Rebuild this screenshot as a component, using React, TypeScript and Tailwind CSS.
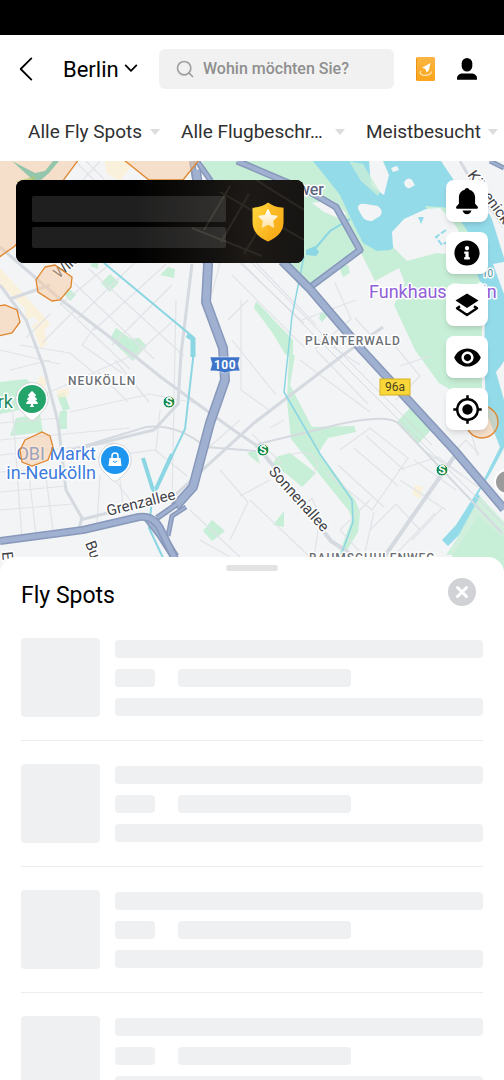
import type { ReactNode } from "react";
import { ChevronDown, ChevronLeft, Search, X } from "lucide-react";
import { FaInfoCircle, FaTree } from "react-icons/fa";
import { MdMyLocation, MdVisibility } from "react-icons/md";

function BookIcon() {
  return (
    <svg width="19" height="24" viewBox="0 0 19 24">
      <defs>
        <linearGradient id="book" x1="0" y1="0" x2="0" y2="1">
          <stop offset="0" stopColor="#fbb544" />
          <stop offset="1" stopColor="#fba51c" />
        </linearGradient>
      </defs>
      <rect width="19" height="24" rx="1.5" fill="url(#book)" />
      <path d="M.5 1v22" stroke="#ef9412" />
      <path d="M14.500 6 6 10.800l3.200 1 1.600 3.700 2-2.200z" fill="#fff" />
      <path d="M5 14c-2 2.500 0 4.500 4.500 4.300 4-.2 6.500-1.800 5.500-3.800" stroke="#ffe5ba" strokeWidth="1.200" fill="none" />
    </svg>
  );
}

function UserIcon() {
  return (
    <svg width="20" height="22" viewBox="0 0 20 22">
      <rect x="4.700" y="0" width="10.600" height="13.600" rx="5.300" />
      <path d="M0 21.800v-1.600c0-2.700 2.600-4.700 5.600-4.700h8.800c3 0 5.600 2 5.600 4.700v1.600z" />
    </svg>
  );
}

function BellIcon() {
  return (
    <svg width="22" height="27" viewBox="0 0 22 27">
      <path d="M11 0c1.200 0 2 .8 2.300 1.800 3.700 1 5.800 4 5.800 7.800v6.200l2.300 2.400c1 1.100.5 2.600-1 2.600H1.600c-1.500 0-2-1.500-1-2.600l2.300-2.400V9.600c0-3.800 2.100-6.800 5.800-7.800C9 .8 9.800 0 11 0z" />
      <path d="M6.500 22.500h9c-.7 2.300-2.300 3.700-4.500 3.700s-3.800-1.400-4.500-3.700z" />
    </svg>
  );
}

function LayersIcon() {
  return (
    <svg width="24" height="24" viewBox="0 0 24 24">
      <path d="M12 .5 23.500 7.600 12 15 .5 7.600z" />
      <path d="M5 13.200 2 15.200l10 6.800 10-6.800-3-2" fill="none" stroke="#000" strokeWidth="2.400" strokeLinejoin="round" />
    </svg>
  );
}

function ShieldIcon() {
  return (
    <svg width="32" height="40" viewBox="0 0 32 40">
      <defs>
        <linearGradient id="shield" x1="0" y1="0" x2="1" y2="1">
          <stop offset="0" stopColor="#ffd83d" />
          <stop offset="1" stopColor="#f9a413" />
        </linearGradient>
        <linearGradient id="star" x1="0" y1="0" x2="0" y2="1">
          <stop offset="0" stopColor="#fff" />
          <stop offset="1" stopColor="#fde3a4" />
        </linearGradient>
      </defs>
      <path d="M16 .5c4 3 9 5 15.500 5.200V20c0 9-5.500 15-15.500 19.500C6 35 .5 29 .5 20V5.700C7 5.500 12 3.500 16 .5z" fill="url(#shield)" />
      <path d="M16 .5c4 3 9 5 15.500 5.200V20c0 9-5.500 15-15.500 19.500z" fill="#f7a70a" opacity=".2" />
      <path d="m16 7.500 2.900 5.900 6.500.9-4.700 4.600 1.100 6.500-5.800-3.100-5.800 3.100 1.100-6.500-4.700-4.600 6.500-.9z" fill="url(#star)" stroke="url(#star)" strokeLinejoin="round" />
    </svg>
  );
}

function Motorway({ d, width = 9 }: { d: string; width?: number }) {
  return (
    <g fill="none" strokeLinejoin="round">
      <path d={d} stroke="#8798ba" strokeWidth={width} />
      <path d={d} stroke="#9fb0d0" strokeWidth={width - 3} />
    </g>
  );
}

function Station({ x, y }: { x: number; y: number }) {
  return (
    <g>
      <circle cx={x} cy={y} r="6" fill="#188a4b" stroke="#fff" />
      <text x={x} y={y + 4} textAnchor="middle" fontSize="12" fontWeight="700" fill="#fff">S</text>
    </g>
  );
}

function Pin({ x, y, color, children }: { x: number; y: number; color: string; children: ReactNode }) {
  return (
    <g transform={`translate(${x} ${y})`}>
      <path d="M0-16.500a16.500 16.500 0 0 1 11 28.500L3 20q-3 3-6 0l-8-8A16.500 16.500 0 0 1 0-16.500z" fill="#fff" stroke="#c3c7cc" strokeWidth=".7" />
      <circle r="14" fill={color} />
      {children}
    </g>
  );
}

function CityMap() {
  return (
    <svg
      className="block h-full w-full"
      viewBox="0 161 504 411"
      preserveAspectRatio="xMidYMin slice"
      fontFamily="Roboto, sans-serif"
    >
      <rect y="161" width="504" height="411" fill="#f3f4f5" />

      {/* Parks */}
      <g fill="#c7eed6">
        <path d="M203 161h115l22 24 14 27 8 38-52 40-28-28-80-90z" />
        <path d="M338 188l14 24 17 18 23 2 22 18h68v140l-14 10-29-17-24-33-21-45 11-22-6-15-24 13-14-28z" />
        <path d="M0 382l26-3 14 12-2 15-38 8zM16 418l24-4 3 18-33 4zM57 395l7-3 6 17-7 2zM60 411h7v18h-10z" />
        <path d="M110 274l9 8-9 10-9-9zM168 267l7 2-1 9-14-3zM92 263h6v6l-8-3zM68 288l8 7-6 6-6-7zM116 328l15 11 8-1 8 8-14 15-23-22zM125 350h14l-5 6z" />
        <path d="M212 520l13 11-13 10-9-10zM247 453l9-3 4 14-8-6zM276 457l14-4 26 20-14 14-14-12-15-10zM284 511v16l-11-2zM339 267l9-2 2 8-7 4zM321 312l7 3-6 7-3-4z" />
        <path d="M256 301l37 39v18l-8-4-13-22-18-24zM289 355h6l-5 30 22 42 42-1 2 6-28 6-9 14 36 48 5 12-2 20-18 30h-4l16-43-3-8-58-72-4-38z" />
        <path d="M397 422l13-14 21 22-13 14zM478 516l26 22v34h-62z" />
      </g>

      {/* Built-up shading */}
      <g fill="#fcefd2" opacity=".7">
        <path d="M0 268l50 55-4 6-46-45zM32 325l11-4 4 22-6 6zM105 161h30l-15 20-14-8zM57 390l12-2-1 8-10 2zM25 310l10-2-1 9-8 2zM415 485l8 2-3 12-8-5zM40 376l8 4-4 8-8-3z" />
      </g>

      {/* River Spree */}
      <path
        d="M313 161h128l12 18 18 17 20 20 13 42v103l-7 12 7 22v62l-25 42-19 35-12 12-6-6 14-15 24-38 20-40-14-35-2-60 1-34-4-35-13-30-18-23-25-4-22 16-13 8-13 1-14-8-10-20-13-28z"
        fill="#94dbea"
      />
      <path d="M425 206l27 2 16 24 11 32-2 12-16-8-5-20z" fill="#c7eed6" />
      <g fill="#f3f4f5">
        <path d="M369 161h14l6 14-5 20-13-9z" />
        <path d="M358 209q-1-6 8-5l12 2q6 5 2 10l-8 5q-8 0-10-5zM404 182q4-6 8-2l3 5-5 3q-5 1-6-6zM391 168l6-2 2 4-6 2zM312 203l20-3 15 14-9 4-14-6z" />
        <path d="M392 232l12-13 22-10 14-1 16 18 9 18-2 12-26-3-30 8-14-14z" />
        <path d="M446 161h58v77l-12-19-12-22-22-14z" />
        <path d="M504 262l-11 2 11 30zM504 362l-8 10 8 28z" />
      </g>
      <path d="M349 161l14 3 17 28-2 4-17-15zM504 448l-22 44-26 48-10 15h60z" fill="#c7eed6" opacity=".8" />
      <path d="M504 448l-14 26-12 20 26 28z" fill="#f3f4f5" />
      <path d="M418 217h6l-3 7z" fill="#94dbea" />
      <path d="M446 230l-10 7 6 8 14-9" fill="none" stroke="#94dbea" strokeWidth="2" strokeDasharray="6 2" />

      {/* Minor streets */}
      <g fill="none" stroke="#e1e3e8" strokeWidth="1.200">
        <path d="M60 305l100-82M78 318l80-78M94 330l72-66M112 345l60-60M130 360l44-40M88 268l96 88M74 283l80 76M60 303l70 66M50 314l-24 24M75 310l-32 32M96 325l-14 20 40 28M20 345l50 8 30 25M0 350l60 14M176 300l-4 200" />
        <path d="M0 423l60-5M0 440l130-12M0 455l115-12M0 472l70-5M0 492l66-6M0 510l72-6M12 400l10 140M26 450l10 85M45 470l8 60M0 400l50-8 90-40M98 372l30 30M115 360l34 42M70 412l80-18 50 10M80 460l75-10 32 26M100 475l-3 50M118 464l5 40M160 410l-4 40" />
        <path d="M240 263l64 60M232 275l72 72M256 263l60 62M232 340l44 55M241 300l0 90 28 20M302 320l54-20M335 283l16 36-36 30M355 318l22 24M330 345l30 20M300 360l70 52M316 350l52 54M270 428l14-8M252 434l30 30" />
        <path d="M340 450l30-22 38 30-36 52-46-38M338 465l46 42M354 448l44 38M366 436l38 34M398 470l40-13 40 30M400 480l46 30M414 460l42 30M423 450l40 26M370 530l26-26 24 26M374 512l-10 45M412 540l30-32M395 555l40-42M456 450l10-10 13 14M300 510l12-12 8 20-6 38M250 500l60 57M290 455q22-8 28 10l-6 10M220 470l28 32-18 38M190 510l50 47M200 540l30 17M240 420l-34 30M270 480l-30 16M370 500l-30 30 20 22" />
        <path d="M390 340l30 36-24 24M400 366l30-10M470 430l8 26M220 263l-8 30M228 320l20-20M10 370l40-10M130 500l-30-40M75 161l22 22M86 161l18 18M100 161l-20 22" />
      </g>

      {/* Secondary roads */}
      <g fill="none" stroke="#d5d9e0" strokeWidth="3">
        <path d="M0 247l60 52 72 55 30 24 70 51 24 16" />
        <path d="M0 285l26 35 18 48 14 54 8 68 16 28-4 14" />
        <path d="M10 299l40-14" />
        <path d="M192 264l-11 90-3 50-24 26-90 22" />
        <path d="M64 452l82-25q30-4 60 20l50 4" strokeWidth="2" />
        <path d="M258 444l70-17q56-14 70-4l104 110" strokeWidth="2" />
        <path d="M80 520l94-24 80-73 89-68 40-28" />
        <path d="M242 263l182 182 80 80M252 263l180 182" strokeWidth="1" />
        <path d="M256 445l20 24 55 72 30 20M382 560l74-106" strokeWidth="4" />
        <path d="M460 161l14 24 30 42" />
      </g>

      {/* Canals */}
      <g fill="none" stroke="#8bd6e3">
        <path d="M104 263l89 74v22l-8 70-30 63" strokeWidth="2" />
        <path d="M187 335l6 4v18" strokeWidth="5" />
        <path d="M172 454l-16 35M143 458l10 32" strokeWidth="4" />
        <path d="M153 490l-4 38 15 32" strokeWidth="2" />
        <path d="M304 256l-12 60-8 76 36 62 32 46 1 22-13 36" strokeWidth="1.500" />
        <path d="M350 219l-20 12-17 20" strokeWidth="2" />
      </g>
      <path d="M306 250l9-4 4 6-3 4-10-1z" fill="#8bd6e3" />

      {/* Motorways */}
      <Motorway d="M192 161l4 24M197 161l14 20" width={6} />
      <Motorway d="M196 170l12 95-2 37 17 46 2 32-15 43-17 64-18 20" width={10} />
      <Motorway d="M177 504l-20 14" width={6} />
      <Motorway d="M186 507l-14 9-4 20" width={5} />
      <Motorway d="M147 517l14 18 14 22" width={9} />
      <Motorway d="M0 541l83-11 56-13q15-2 22 13l17 35" width={8} />
      <Motorway d="M237 161l73 31 26 15 24 43-51 38" width={7} />
      <Motorway d="M282 261l28 28 52 61 93 101 49 58" width={9} />
      <Motorway d="M490 161l14 7" width={5} />

      {/* Labels */}
      <g stroke="#fff" strokeWidth="3" strokeLinejoin="round" paintOrder="stroke" fill="#6b6f75">
        <g fontSize="12" fontWeight="500" letterSpacing="1">
          <text x="68" y="385">NEUKÖLLN</text>
          <text x="305" y="345">PLÄNTERWALD</text>
          <text x="309" y="562">BAUMSCHULENWEG</text>
        </g>
        <g fontSize="18">
          <text x="324" y="195" textAnchor="end" fontSize="16" fontWeight="500" fill="#5b6781">Treptower</text>
          <text x="13" y="408" textAnchor="end" fill="#1f8a5f">rk</text>
          <text x="96" y="460" textAnchor="end" fill="#3c7bdc">OBI Markt</text>
          <text x="96" y="479" textAnchor="end" fill="#3c7bdc">in-Neukölln</text>
          <text x="369" y="298" fill="#9160d8">Funkhaus Berlin</text>
        </g>
        <g fontSize="15" fill="#3f4247">
          <text transform="translate(108 516) rotate(-14)">Grenzallee</text>
          <text transform="translate(268 472) rotate(48)">Sonnenallee</text>
          <text transform="translate(59 279) rotate(-42)">Wildenbruch</text>
          <text transform="translate(85 543) rotate(70)">Bu</text>
          <text transform="translate(2 552) rotate(85)">E</text>
          <text transform="translate(467 175) rotate(54)">Köpenicker</text>
          <text x="482" y="277" fontSize="10" fill="#3f94a8">10</text>
        </g>
      </g>

      {/* Flight restriction zones */}
      <g fill="#f7c9a0" fillOpacity=".5" stroke="#e0862e" strokeWidth="1.300">
        <path d="M-2 159h81L15 246-2 258zM124 160l25 20h34l16-20z" />
        <path d="M45 267l10-2 17 12-1 10-11 13-8 1-14-9-2-12z" />
        <path d="M-2 306l7-1 12 5 3 12-8 11-14 3z" />
        <path d="M25 440l17-8 8 4 3 11-5 13-16 6-10-4-2-12z" />
        <circle cx="482" cy="422" r="16" />
      </g>
      <path d="M12 161l23 12 10-2 8-10h6l-10 12-9 8h-6z" fill="#7cbfa5" opacity=".8" />
      <path d="M15 182l20-6v6z" fill="#b4c86f" opacity=".7" />

      {/* Places */}
      <Pin x={32} y={399} color="#24a36b">
        <FaTree x="-8" y="-8" size="16" color="#fff" />
      </Pin>
      <Pin x={115} y={460} color="#1e96f0">
        <path d="M-5.500-2h11l1 8h-13z" fill="#fff" />
        <path d="M-3 0v-4q0-3 3-3t3 3v4" fill="none" stroke="#fff" strokeWidth="1.500" />
        <path d="M-2 1q2 3 4 0" fill="none" stroke="#1e96f0" />
      </Pin>
      <Station x={169} y={402} />
      <Station x={263} y={450} />
      <Station x={442} y={470} />
      <circle cx="507" cy="482" r="12" fill="#9b9b9b" stroke="#fff" strokeWidth="2" />
      <path d="M210 357h30l-2 7 2 7q-7-1-15 2-8-3-15-2l2-7z" fill="#3d73c9" stroke="#fff" strokeWidth=".5" />
      <text x="225" y="369" textAnchor="middle" fontSize="12" fontWeight="700" letterSpacing="0.5" fill="#fff">100</text>
      <rect x="380" y="379" width="30" height="16" fill="#fad739" stroke="#d9b21f" />
      <text x="395" y="391" textAnchor="middle" fontSize="12" fill="#4c4420">96a</text>
    </svg>
  );
}

function MapButton({ label, children }: { label: string; children: ReactNode }) {
  return (
    <button
      aria-label={label}
      className="flex h-[42px] w-[42px] items-center justify-center rounded-lg bg-white text-black shadow-md"
    >
      {children}
    </button>
  );
}

function Filter({ label, value, className = "" }: { label: string; value: string; className?: string }) {
  return (
    <div className={`relative flex shrink-0 items-center ${className}`}>
      <select aria-label={label} className="w-full appearance-none bg-transparent pr-[17px] text-[19px] text-[#303030] outline-none">
        <option>{value}</option>
      </select>
      <svg className="pointer-events-none absolute right-0" width="10" height="6" viewBox="0 0 10 6">
        <path d="M0 0h10L5 6z" fill="#dcdcdc" />
      </svg>
    </div>
  );
}

function SkeletonRow() {
  return (
    <li className="flex gap-[15px] border-b border-[#ededef] py-[23px]">
      <div className="h-[79px] w-[79px] shrink-0 rounded bg-[#eff0f2]" />
      <div className="flex flex-1 flex-col gap-[11px] pt-[2px]">
        <div className="h-[18px] rounded bg-[#eff0f2]" />
        <div className="flex gap-[23px]">
          <div className="h-[18px] w-10 rounded bg-[#eff0f2]" />
          <div className="h-[18px] w-[47%] rounded bg-[#eff0f2]" />
        </div>
        <div className="h-[18px] rounded bg-[#eff0f2]" />
      </div>
    </li>
  );
}

export default function App() {
  return (
    <div className="flex h-screen flex-col overflow-hidden bg-white font-['Roboto',sans-serif]">
      {/* Status bar */}
      <div className="h-[35px] shrink-0 bg-black" />

      <header className="flex h-[68px] shrink-0 items-center pr-[27px] pl-[10px]">
        <button aria-label="Zurück" className="text-black">
          <ChevronLeft className="h-8 w-8" viewBox="3 3 18 18" strokeWidth={1} />
        </button>
        <div className="relative ml-[21px] flex items-center">
          <select aria-label="Stadt" className="appearance-none bg-transparent pr-[20px] text-[22px] text-black outline-none">
            <option>Berlin</option>
          </select>
          <ChevronDown className="pointer-events-none absolute right-0 h-4 w-4" viewBox="3 4 18 18" strokeWidth={2} />
        </div>
        <label className="ml-5 flex h-10 min-w-0 flex-1 items-center gap-2 rounded-md bg-[#f1f1f1] px-4">
          <Search className="h-5 w-5 shrink-0 text-[#a0a0a0]" strokeWidth={2} />
          <input
            type="text"
            aria-label="Suche"
            placeholder="Wohin möchten Sie?"
            className="min-w-0 flex-1 bg-transparent text-base font-medium outline-none placeholder:text-[#8f8f8f]"
          />
        </label>
        <button aria-label="Handbuch" className="ml-[22px]">
          <BookIcon />
        </button>
        <button aria-label="Profil" className="ml-[22px]">
          <UserIcon />
        </button>
      </header>

      <nav className="flex h-[58px] shrink-0 items-center gap-[21px] overflow-hidden pl-7">
        <Filter label="Fly Spots" value="Alle Fly Spots" />
        <Filter label="Flugbeschränkungen" value="Alle Flugbeschr…" className="w-[164px]" />
        <Filter label="Sortierung" value="Meistbesucht" />
      </nav>

      <section className="relative h-[411px] shrink-0">
        <CityMap />

        {/* Membership card, still loading */}
        <div className="absolute top-[19px] left-4 flex h-[83px] w-72 items-center justify-between overflow-hidden rounded-lg bg-black pr-5 pl-4">
          <svg className="absolute inset-0 h-full w-full" viewBox="0 0 288 83" fill="none">
            <defs>
              <linearGradient id="glow">
                <stop offset=".4" stopColor="#000" />
                <stop offset=".8" stopColor="#1c1916" />
                <stop offset="1" stopColor="#171513" />
              </linearGradient>
            </defs>
            <rect width="288" height="83" fill="url(#glow)" />
            <path d="M188 50l26-44M205 62l28-48M176 48l70 28M204 12l84 48M228 74l26-44M240 0l48 30" stroke="#38332c" strokeWidth="2" opacity=".6" />
          </svg>
          <div className="relative flex flex-col gap-[5px]">
            <div className="h-[26px] w-[194px] rounded-xs bg-white/12" />
            <div className="h-[21px] w-[194px] rounded-xs bg-white/12" />
          </div>
          <div className="relative">
            <ShieldIcon />
          </div>
        </div>

        <div className="absolute top-[19px] right-4 flex flex-col gap-[10px]">
          <MapButton label="Mitteilungen"><BellIcon /></MapButton>
          <MapButton label="Info"><FaInfoCircle size={26} /></MapButton>
          <MapButton label="Ebenen"><LayersIcon /></MapButton>
          <MapButton label="Ansicht"><MdVisibility size={29} /></MapButton>
          <MapButton label="Mein Standort"><MdMyLocation size={31} /></MapButton>
        </div>
      </section>

      <section className="relative -mt-[15px] min-h-0 flex-1 overflow-hidden rounded-t-2xl bg-white px-[21px] pt-2">
        <div className="mx-auto h-[6px] w-[52px] rounded-full bg-[#e3e3e3]" />
        <div className="flex h-[44px] items-center justify-between pt-[6px]">
          <h2 className="text-[23px] text-black">Fly Spots</h2>
          <button aria-label="Schließen" className="mr-[7px] mb-2 flex h-7 w-7 items-center justify-center rounded-full bg-[#d0d2d6] text-white">
            <X className="h-[18px] w-[18px]" strokeWidth={4} />
          </button>
        </div>
        <ul>
          <SkeletonRow />
          <SkeletonRow />
          <SkeletonRow />
          <SkeletonRow />
        </ul>
      </section>
    </div>
  );
}
